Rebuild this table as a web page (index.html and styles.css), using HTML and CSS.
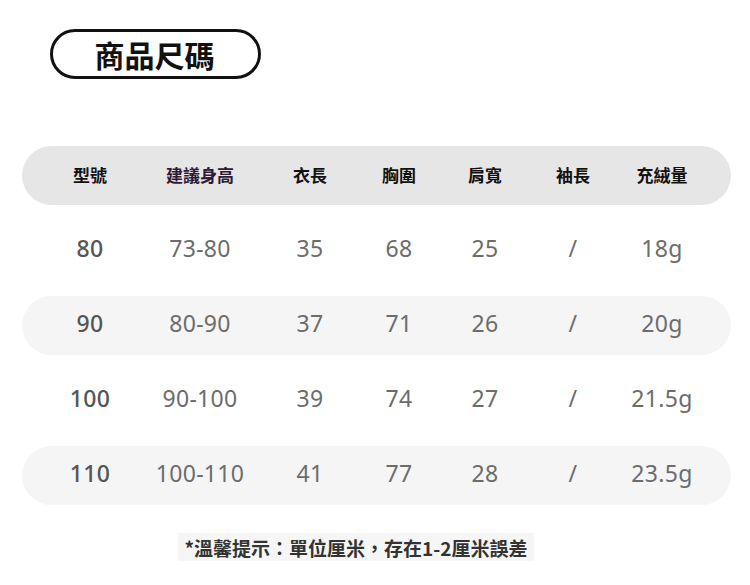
FILE: index.html
```html
<!DOCTYPE html>
<html lang="zh-Hant">
<head>
<meta charset="utf-8">
<link rel="stylesheet" href="styles.css">
</head>
<body>
<div class="page">
  <div class="title-row">
    <div class="title">商品尺碼</div>
  </div>
  <div class="table">
    <div class="row head">
      <div>型號</div><div class="accent">建議身高</div><div>衣長</div><div>胸圍</div><div>肩寬</div><div>袖長</div><div>充絨量</div>
    </div>
    <div class="row">
      <div class="size">80</div><div>73-80</div><div>35</div><div>68</div><div>25</div><div>/</div><div>18g</div>
    </div>
    <div class="row alt">
      <div class="size">90</div><div>80-90</div><div>37</div><div>71</div><div>26</div><div>/</div><div>20g</div>
    </div>
    <div class="row">
      <div class="size">100</div><div>90-100</div><div>39</div><div>74</div><div>27</div><div>/</div><div>21.5g</div>
    </div>
    <div class="row alt">
      <div class="size">110</div><div>100-110</div><div>41</div><div>77</div><div>28</div><div>/</div><div>23.5g</div>
    </div>
  </div>
  <div class="note-row">
    <div class="note">*溫馨提示：單位厘米，存在1-2厘米誤差</div>
  </div>
</div>
</body>
</html>
```
FILE: styles.css
```css
* { box-sizing: border-box; }
html, body { margin: 0; padding: 0; background: #fff; }
.page {
  width: 750px;
  height: 585px;
  padding-top: 29px;
  font-family: "Noto Sans", "Noto Sans CJK TC", sans-serif;
}
.title-row { padding-left: 50px; }
.title {
  width: 211px;
  height: 50px;
  border: 3px solid #111;
  border-radius: 25px;
  display: flex;
  align-items: center;
  justify-content: center;
  font-family: "Noto Sans CJK TC", sans-serif;
  font-weight: 700;
  font-size: 30px;
  color: #111;
  padding-right: 2px;
}
.table {
  margin-top: 67px;
  margin-left: 22px;
  width: 709px;
  display: flex;
  flex-direction: column;
  gap: 16px;
}
.row {
  height: 59px;
  border-radius: 30px;
  display: grid;
  grid-template-columns: 110px 110px 110px 68px 104px 72px 106px;
  padding-left: 13px;
  padding-bottom: 5px;
  align-items: center;
  font-size: 23px;
  letter-spacing: 0.3px;
  color: #6c6c6c;
}
.row > div { text-align: center; white-space: nowrap; }
.row.alt { background: #f5f5f5; }
.row.head {
  background: #e6e6e6;
  font-family: "Noto Sans CJK TC", sans-serif;
  font-weight: 700;
  font-size: 17px;
  letter-spacing: 0;
  color: #111;
  padding-bottom: 2px;
}
.row.head .accent { color: #2e1a36; }
.size { color: #555; font-weight: 500; }
.note-row {
  margin-top: 28px;
  display: flex;
  justify-content: center;
  padding-right: 38px;
}
.note {
  background: #f6f6f6;
  height: 28px;
  padding: 0 6px;
  display: flex;
  align-items: center;
  font-family: "Noto Sans CJK TC", sans-serif;
  font-weight: 700;
  font-size: 19px;
  color: #333;
}
```
